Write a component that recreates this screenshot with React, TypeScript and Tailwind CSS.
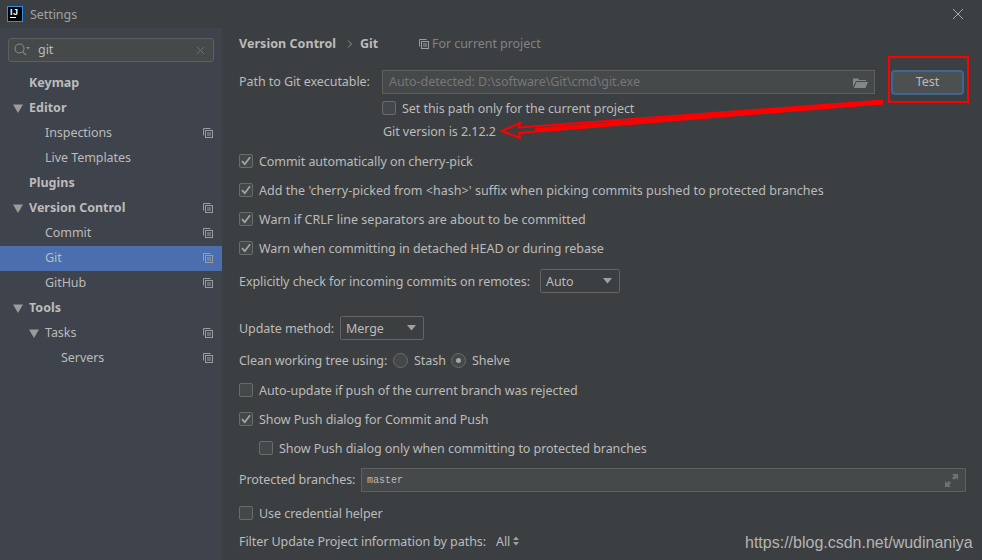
const FONT = "font-['Noto_Sans','Open_Sans',sans-serif]";

function Scope({ className = "" }: { className?: string }) {
  return (
    <svg width="10" height="10" viewBox="0 0 10 10" fill="none" stroke="#9a9da0" strokeWidth="1" className={className}>
      <path d="M0.5 7.5V0.5H7.5" />
      <rect x="2.5" y="2.5" width="7" height="7" />
      <path d="M4 5H8M4 7H8" />
    </svg>
  );
}

function Tri() {
  return (
    <svg width="10" height="9" viewBox="0 0 10 9" className="shrink-0">
      <path d="M0 0.5H10L5 9Z" fill="#9b9b9b" />
    </svg>
  );
}

function TreeRow({ label, bold, arrow, indent, scope, selected }: { label: string; bold?: boolean; arrow?: boolean; indent: number; scope?: boolean; selected?: boolean }) {
  return (
    <div className={`relative flex h-[25px] items-center ${selected ? "bg-[#4b6eaf]" : ""}`}>
      {arrow && (
        <span className="flex w-4 justify-center" style={{ marginLeft: indent - 19 }}>
          <Tri />
        </span>
      )}
      <span className={`${bold ? "font-bold tracking-normal" : ""} text-[#bbbbbb]`} style={{ marginLeft: arrow ? 3 : indent }}>
        {label}
      </span>
      {scope && <Scope className="absolute left-[203px] top-[7px]" />}
    </div>
  );
}

function Check({ checked }: { checked?: boolean }) {
  return (
    <span className="flex h-[14px] w-[14px] shrink-0 items-center justify-center rounded-[2px] border border-[#6b6b6b] bg-[#43494a]">
      {checked && (
        <svg width="10" height="10" viewBox="0 0 10 10" fill="none" stroke="#a7a7a7" strokeWidth="1.7">
          <path d="M1 5.2L3.8 8.2L9 1.2" />
        </svg>
      )}
    </span>
  );
}

function CheckRow({ label, checked, className = "" }: { label: string; checked?: boolean; className?: string }) {
  return (
    <div className={`flex h-5 items-center gap-[6px] ${className}`}>
      <Check checked={checked} />
      <span className="pt-[2px]">{label}</span>
    </div>
  );
}

function Combo({ label, className }: { label: string; className: string }) {
  return (
    <span className={`flex h-6 items-center justify-between rounded-[2px] border border-[#646464] bg-[#3c3f41] pl-[5px] pr-[6px] ${className}`}>
      <span className="pt-[2px]">{label}</span>
      <svg width="10" height="6" viewBox="0 0 10 6"><path d="M0 0H9L4.5 5.5Z" fill="#a0a0a0" /></svg>
    </span>
  );
}

function Radio({ on }: { on?: boolean }) {
  return (
    <span className="flex h-[15px] w-[15px] items-center justify-center rounded-full border border-[#6b6b6b] bg-[#43494a]">
      {on && <span className="h-[5px] w-[5px] rounded-full bg-[#a7a7a7]" />}
    </span>
  );
}

export default function App() {
  return (
    <div className={`relative flex h-[560px] w-[982px] flex-col overflow-hidden bg-[#3c3f41] text-[12.5px] tracking-[-0.06px] text-[#bbbbbb] ${FONT}`}>
      <div className="flex h-7 shrink-0 items-center pl-[7px]">
        <span className="flex h-4 w-4 flex-col items-start border border-[#2f8fe8] bg-black pl-[2px] pt-[1px]">
          <span className="font-['Liberation_Sans',sans-serif] text-[9px] font-bold leading-[8px] tracking-[0.5px] text-white">IJ</span>
          <span className="mt-[1px] h-[1px] w-[6px] bg-white" />
        </span>
        <span className="ml-[7px] pt-[2px] text-[#9fa2a4]">Settings</span>
        <svg width="12" height="12" viewBox="0 0 12 12" stroke="#a9a9a9" strokeWidth="1" className="ml-auto mr-[18px]">
          <path d="M1 1L11 11M11 1L1 11" />
        </svg>
      </div>
      <div className="flex min-h-0 flex-1">
        <aside className="w-[222px] shrink-0 bg-[#3f434c]">
          <div className="mx-2 mt-[10px] flex h-6 w-[206px] items-center rounded-[3px] border border-[#5e6060] bg-[#45494a] pl-[5px] pr-[8px]">
            <svg width="16" height="14" viewBox="0 0 16 14" fill="none" stroke="#878a8c" strokeWidth="1.1">
              <circle cx="5.5" cy="5.5" r="4.5" />
              <path d="M8.8 8.8L12 12" />
              <path d="M12 4H16L14 6.5Z" fill="#878a8c" stroke="none" />
            </svg>
            <span className="ml-[8px] text-[#bbbbbb]">git</span>
            <svg width="9" height="9" viewBox="0 0 9 9" stroke="#6d7072" strokeWidth="1" className="ml-auto">
              <path d="M1 1L8 8M8 1L1 8" />
            </svg>
          </div>
          <div className="mt-[9px]">
            <TreeRow label="Keymap" bold indent={29} />
            <TreeRow label="Editor" bold arrow indent={29} />
            <TreeRow label="Inspections" indent={45} scope />
            <TreeRow label="Live Templates" indent={45} />
            <TreeRow label="Plugins" bold indent={29} />
            <TreeRow label="Version Control" bold arrow indent={29} scope />
            <TreeRow label="Commit" indent={45} scope />
            <TreeRow label="Git" indent={45} scope selected />
            <TreeRow label="GitHub" indent={45} scope />
            <TreeRow label="Tools" bold arrow indent={29} />
            <TreeRow label="Tasks" arrow indent={45} scope />
            <TreeRow label="Servers" indent={61} scope />
          </div>
        </aside>
        <main className="min-w-0 flex-1 pl-[17px] pr-4">
          <div className="mt-[6px] flex h-5 items-center">
            <span className="w-[97px] whitespace-nowrap font-bold tracking-[0.05px]">Version Control</span>
            <svg width="6" height="8" viewBox="0 0 6 8" fill="none" stroke="#8f9295" strokeWidth="1" className="ml-[11px]"><path d="M1 0.5L4.5 4L1 7.5" /></svg>
            <span className="ml-[7px] w-[18px] font-bold">Git</span>
            <Scope className="ml-[41px]" />
            <span className="ml-[3px] text-[#808487]">For current project</span>
          </div>
          <div className="mt-4 flex h-6 items-center">
            <span className="w-[143px]">Path to Git executable:</span>
            <span className="flex h-6 w-[493px] items-center justify-between border border-[#5e6060] bg-[#45494a] px-[6px] text-[#777777]">
              <span>Auto-detected: D:\software\Git\cmd\git.exe</span>
              <svg width="15" height="11" viewBox="0 0 15 11" fill="#83868a"><path d="M0 1.5H5L6.5 3H13V4H3L0 10V1.5ZM3.5 5H15L12.5 11H1Z" /></svg>
            </span>
            <span className="relative ml-4 flex h-[25px] w-[73px] items-center justify-center rounded-[4px] border-2 border-[#3f6690] bg-[#4c5052] text-[#bbbbbb]">Test</span>
          </div>
          <div className="ml-[143px] mt-[2px] flex h-6 items-center gap-[6px]">
            <Check />
            <span className="pt-[2px]">Set this path only for the current project</span>
          </div>
          <div className="ml-[144px] flex h-[22px] items-center pt-[2px]">Git version is 2.12.2</div>
          <CheckRow className="mt-[9px]" checked label="Commit automatically on cherry-pick" />
          <CheckRow className="mt-[9px] tracking-[0.03px]" checked label="Add the 'cherry-picked from <hash>' suffix when picking commits pushed to protected branches" />
          <CheckRow className="mt-[9px] tracking-[0.03px]" checked label="Warn if CRLF line separators are about to be committed" />
          <CheckRow className="mt-[9px]" checked label="Warn when committing in detached HEAD or during rebase" />
          <div className="mt-[11px] flex h-6 items-center">
            <span className="w-[301px] whitespace-nowrap pt-[2px]">Explicitly check for incoming commits on remotes:</span>
            <Combo label="Auto" className="w-20" />
          </div>
          <div className="mt-[23px] flex h-6 items-center">
            <span className="w-[101px] whitespace-nowrap pt-[2px]">Update method:</span>
            <Combo label="Merge" className="w-[84px]" />
          </div>
          <div className="mt-[10px] flex h-5 items-center">
            <span className="w-[154px] whitespace-nowrap pt-[2px]">Clean working tree using:</span>
            <Radio />
            <span className="ml-[6px] w-[37px] pt-[2px]">Stash</span>
            <Radio on />
            <span className="ml-[6px] pt-[2px]">Shelve</span>
          </div>
          <CheckRow className="mt-[10px]" label="Auto-update if push of the current branch was rejected" />
          <CheckRow className="mt-[9px]" checked label="Show Push dialog for Commit and Push" />
          <CheckRow className="ml-5 mt-[9px]" label="Show Push dialog only when committing to protected branches" />
          <div className="mt-[10px] flex h-6 items-center">
            <span className="w-[122px] shrink-0 whitespace-nowrap">Protected branches:</span>
            <span className="flex h-6 w-[605px] items-center justify-between border border-[#5e6060] bg-[#45494a] pl-[5px] pr-[7px] font-['Liberation_Mono',monospace] text-[10px] tracking-normal">
              <span>master</span>
              <svg width="13" height="13" viewBox="0 0 13 13" fill="#6e7274"><path d="M7 0H13V6L11 4L9 6L7 4L9 2ZM0 7L2 9L4 7L6 9L4 11L6 13H0Z" /></svg>
            </span>
          </div>
          <CheckRow className="mt-[11px]" label="Use credential helper" />
          <div className="mt-2 flex h-5 items-center">
            <span className="w-[257px] whitespace-nowrap pt-[2px]">Filter Update Project information by paths:</span>
            <span className="pt-[2px]">All</span>
            <svg width="6" height="10" viewBox="0 0 6 10" fill="#a0a0a0" className="ml-[3px]"><path d="M0 4L3 0.5L6 4ZM0 6L3 9.5L6 6Z" /></svg>
          </div>
        </main>
      </div>

      <div className="absolute left-[888px] top-[56px] h-[47px] w-[81px] border-2 border-[#ff0000]" />
      <svg width="400" height="50" viewBox="0 0 400 50" fill="none" className="absolute left-[495px] top-[95px]">
        <path d="M25 28L7 36L25 43L24 38L387 8.5L387 5.5L24 32.5Z" stroke="#ff0000" strokeWidth="2" />
        <path d="M40 34.5L387 7" stroke="#ff0000" strokeWidth="3" />
      </svg>
      <span className="absolute left-[745px] top-[531px] font-['Liberation_Sans',sans-serif] text-base tracking-normal text-[#b4b4b4]">https://blog.csdn.net/wudinaniya</span>
    </div>
  );
}
